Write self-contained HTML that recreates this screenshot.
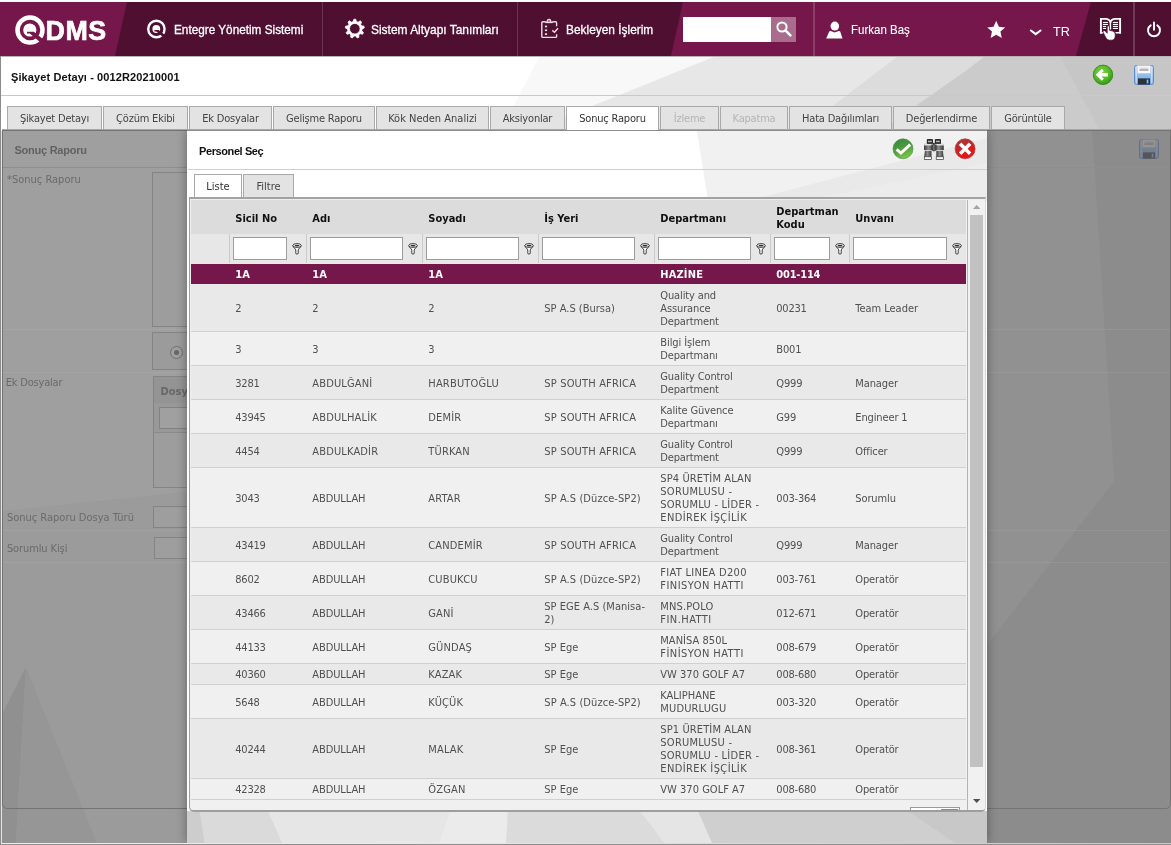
<!DOCTYPE html>
<html lang="tr"><head><meta charset="utf-8"><title>QDMS - Şikayet Detayı</title>
<style>
*{box-sizing:border-box;margin:0;padding:0}
html,body{width:1171px;height:845px;overflow:hidden;background:#fff}
#root{position:absolute;left:0;top:0;width:1171px;height:845px;overflow:hidden;will-change:transform}
body{position:relative;font-family:"DejaVu Sans Condensed","DejaVu Sans","Liberation Sans",sans-serif;font-stretch:condensed;font-size:11px;color:#505050;line-height:13px}
.abs{position:absolute}
#hdr{position:absolute;left:0;top:2px;width:1171px;height:54px;background:#75174a;overflow:hidden}
#hdr .nav{position:absolute;top:1px;height:54px;line-height:54px;color:#fff;font-family:"Liberation Sans",sans-serif;font-stretch:normal;font-size:13px;white-space:nowrap;transform-origin:0 50%;-webkit-text-stroke:0.3px #fff}
#hdr .sep{position:absolute;top:0;height:54px}
#titlebar{position:absolute;left:0;top:56px;width:1171px;height:40px}
#titlebar .t{position:absolute;left:11px;top:13px;letter-spacing:0.1px;font-family:"Liberation Sans",sans-serif;font-stretch:normal;font-weight:bold;font-size:11px;color:#111;line-height:16px;white-space:nowrap}
.tab{position:absolute;top:106px;height:23px;border:1px solid #a9a9a9;border-bottom:none;background:#e3e3e3;color:#444;text-align:center;line-height:23px;font-size:11px;white-space:nowrap;letter-spacing:-0.2px}
.tab.on{background:#fff;color:#333;height:24px;z-index:2}
.tab.dis{color:#b4b4b4}
#tabline{position:absolute;left:2px;top:129px;width:1169px;height:1px;background:#a6a6a6}


.lb{color:#aaaaaa;white-space:nowrap;letter-spacing:0}
.hd{font-weight:bold;color:#111;font-size:11px;line-height:13px;white-space:nowrap}
.row{position:absolute;left:0;border-bottom:1px solid #d0d0d0}
.row.a{background:#e9e9e9}
.row.b{background:#f0f0f0}
.row.sel{background:#75174a;color:#fff;font-weight:bold;border-bottom-color:#75174a}
.row .c{position:absolute;white-space:nowrap;line-height:13px}
</style></head><body><div id="root">
<svg class="abs" style="left:0;top:56px" width="1171" height="789" viewBox="0 0 1171 789">
<rect width="1171" height="789" fill="#ffffff"/>
<polygon points="540,0 716,0 530,75 500,75" fill="#f8f8f8"/>
<polygon points="716,0 1171,0 1171,75 530,75" fill="#e7e7e7"/>
<polygon points="898,0 1171,0 1171,75 800,75" fill="#dcdcdc"/>
<polygon points="985,0 1171,0 1171,75 880,75 967,14" fill="#cbcbcb"/>
<polygon points="1060,0 1171,0 1171,75 1100,75" fill="#c6c6c6"/>
<rect x="0" y="75" width="1171" height="714" fill="#e4e4e4"/>
<rect x="0" y="787" width="400" height="1" fill="#f4f4f4"/>
</svg>
<div id="hdr">
<svg class="abs" style="left:0;top:0" width="1171" height="54" viewBox="0 0 1171 54"><polygon points="127,0 683,0 671,54 115,54" fill="#4f0f31"/><polygon points="1091,0 1171,0 1171,54 1076,54" fill="#4f0f31"/></svg>
<svg class="abs" style="left:13px;top:11px" width="34" height="34" viewBox="0 0 34 34"><circle cx="17" cy="17" r="12.500" fill="none" stroke="#fff" stroke-width="4.500"/><circle cx="16.800" cy="17" r="6.600" fill="#fff"/><path d="M14 18.800H20.800L29.800 26L26.600 28.800L16.800 20.600H14z" fill="#75174a"/></svg>
<div class="abs" style="left:45.5px;top:9.4px;font-family:'Liberation Sans',sans-serif;font-stretch:normal;font-weight:bold;font-size:26.8px;line-height:40px;color:#fff;-webkit-text-stroke:0.7px #fff;letter-spacing:0.6px">DMS</div>
<svg class="abs" style="left:146px;top:17px" width="21" height="21" viewBox="0 0 21 21"><circle cx="10.400" cy="10" r="8.200" fill="none" stroke="#fff" stroke-width="2.400"/><circle cx="10.300" cy="10" r="3.900" fill="#fff"/><path d="M8.400 11.100H12.600L19 15.900L17 17.900L10.400 12.400H8.400z" fill="#4f0f31"/></svg>
<div class="nav" style="left:174px;transform:scaleX(0.905)">Entegre Yönetim Sistemi</div>
<div class="sep" style="left:322px;width:1px;background:#6a3450"></div>
<svg class="abs" style="left:344px;top:16px" width="22" height="22" viewBox="0 0 22 22"><path d="M9.89 1.24L11.71 1.24L12.44 3.59L14.11 4.20L16.18 2.87L17.58 4.04L16.63 6.31L17.52 7.85L19.95 8.16L20.27 9.95L18.09 11.08L17.78 12.83L19.44 14.64L18.53 16.22L16.14 15.68L14.78 16.82L14.89 19.27L13.18 19.90L11.69 17.95L9.91 17.95L8.42 19.90L6.71 19.27L6.82 16.82L5.46 15.68L3.07 16.22L2.16 14.64L3.82 12.83L3.51 11.08L1.33 9.95L1.65 8.16L4.08 7.85L4.97 6.31L4.02 4.04L5.42 2.87L7.49 4.20L9.16 3.59zM10.8 5.400A5.3 5.3 0 1 0 10.8 16.000A5.3 5.3 0 1 0 10.8 5.400z" fill="#fff" fill-rule="evenodd" stroke="#fff" stroke-width="0.800" stroke-linejoin="round"/></svg>
<div class="nav" style="left:370.800px;transform:scaleX(0.918)">Sistem Altyapı Tanımları</div>
<div class="sep" style="left:517px;width:1px;background:#6a3450"></div>
<svg class="abs" style="left:540px;top:15px" width="19" height="23" viewBox="0 0 19 23"><g fill="none" stroke="#eadde4"><path d="M5.600 4.800H2.800a1 1 0 0 0-1 1V19.400a1 1 0 0 0 1 1H15.600a1 1 0 0 0 1-1V17.300M12.400 4.800H15.600a1 1 0 0 1 1 1V9.200" stroke-width="1.400"/><path d="M5.200 5.300H12.800" stroke-width="1.700"/><path d="M7.300 4.800Q7.300 2.500 9 2.500Q10.700 2.500 10.700 4.800" stroke-width="1.400"/><path d="M12.300 13.400L14.500 15.300L18 11.200" stroke-width="1.400"/></g><g fill="#eadde4"><rect x="4.900" y="8.600" width="2.200" height="1.700"/><rect x="4.900" y="12.400" width="2.200" height="1.700"/><rect x="4.900" y="16.300" width="2.200" height="1.700"/></g></svg>
<div class="nav" style="left:565.800px;transform:scaleX(0.915)">Bekleyen İşlerim</div>
<div class="abs" style="left:683px;top:15px;width:88px;height:25px;background:#fff"></div>
<div class="abs" style="left:771px;top:15px;width:25px;height:25px;background:#a96c8d"></div>
<svg class="abs" style="left:775px;top:18px" width="18" height="18" viewBox="0 0 18 18"><circle cx="7" cy="7" r="4.6" fill="none" stroke="#fff" stroke-width="2"/><path d="M10.4 10.4L15.4 15.4" stroke="#fff" stroke-width="2.6" stroke-linecap="round"/></svg>
<div class="sep" style="left:813px;width:2px;background:#8b3e66"></div>
<svg class="abs" style="left:824.800px;top:17.500px" width="19" height="19.800" viewBox="0 0 18 19" preserveAspectRatio="none"><ellipse cx="9.300" cy="5.800" rx="4.100" ry="4.300" fill="#fff"/><path d="M1.100 17.700L3.900 11.300Q4.300 10.300 5.400 10.600L9.200 12.100L13 10.600Q14.100 10.300 14.500 11.300L16.600 17.700z" fill="#fff"/></svg>
<div class="nav" style="left:851px;transform:scaleX(0.885);-webkit-text-stroke:0.1px #fff">Furkan Baş</div>
<svg class="abs" style="left:986.300px;top:18px" width="20.400" height="19" viewBox="0 0 19 18"><polygon points="9.5,0.8 12,6.4 18,7 13.500,11 14.800,17 9.500,13.900 4.200,17 5.500,11 1,7 7,6.400" fill="#fff"/></svg>
<svg class="abs" style="left:1029px;top:27px" width="14" height="8" viewBox="0 0 14 8"><path d="M1.900 1.500L6.700 5.200L11.500 1.500" fill="none" stroke="#fff" stroke-width="2.100" stroke-linecap="round"/></svg>
<div class="nav" style="left:1053px;top:3px;transform:scaleX(0.97);-webkit-text-stroke:0">TR</div>
<svg class="abs" style="left:1099px;top:14px" width="23" height="26" viewBox="0 0 23 26"><g fill="none" stroke="#fff" stroke-width="1.900"><path d="M1.900 17.500V2.900H6.500Q10.400 2.900 11.400 6.400"/><path d="M21.100 17.500V2.900H16.300Q12.400 2.900 11.400 6.400"/></g><path d="M11.400 6V13.500" stroke="#fff" stroke-width="1.500"/><path d="M0.900 16.700H4.200M16.500 16.700H22" stroke="#fff" stroke-width="1.600"/><g fill="#fff"><rect x="3.900" y="5.900" width="5" height="1.100"/><rect x="3.900" y="7.900" width="5" height="1.100"/><rect x="3.900" y="9.900" width="3.200" height="1.100"/><rect x="3.900" y="11.900" width="3.200" height="1.100"/><rect x="13.900" y="5.900" width="5.100" height="1.100"/><rect x="13.900" y="7.900" width="5.100" height="1.100"/><rect x="13.900" y="9.900" width="5.100" height="1.100"/><rect x="13.900" y="11.900" width="5.100" height="1.100"/></g><path d="M8.200 11Q8.200 9.700 9.300 9.700Q10.400 9.700 10.400 11V14.300L13.500 15Q16.200 15.700 16.200 18V20Q16.200 24.200 12 24.200H10.600Q8 24.200 6.800 21.600L4.100 16.300Q3.600 15.100 4.700 14.700Q5.700 14.400 6.400 15.300L8.200 17.300z" fill="#fff" stroke="#4f0f31" stroke-width="0.700"/></svg>
<div class="sep" style="left:1133px;width:2px;background:#6e3a55"></div>
<svg class="abs" style="left:1144.800px;top:18.700px" width="18" height="17.500" viewBox="0 0 17 17"><path d="M5.300 4.200A5.800 5.800 0 1 0 11.700 4.200" fill="none" stroke="#fff" stroke-width="1.900" stroke-linecap="round"/><path d="M8.500 1.500V8.500" stroke="#fff" stroke-width="1.900" stroke-linecap="round"/></svg>
</div>
<div class="abs" style="left:0;top:56px;width:1171px;height:1px;background:#b5b5b5"></div>
<div class="abs" style="left:0;top:56px;width:1px;height:789px;background:#8c8c8c;z-index:9"></div>
<div id="titlebar"><div class="t">Şikayet Detayı - 0012R20210001</div></div>
<div class="abs" style="left:1px;top:95px;width:1170px;height:1px;background:#c9c9c9"></div>
<svg class="abs" style="left:1092px;top:64px" width="22" height="22" viewBox="0 0 22 22"><defs><radialGradient id="gb" cx="0.42" cy="0.35" r="0.75"><stop offset="0" stop-color="#7fd543"/><stop offset="0.55" stop-color="#55b625"/><stop offset="1" stop-color="#2f9014"/></radialGradient></defs><circle cx="11" cy="10.800" r="9.700" fill="url(#gb)" stroke="#2c8a14" stroke-width="0.900"/><path d="M10.800 5.900L5.800 10.800L10.800 15.700" fill="none" stroke="#fff" stroke-width="2.900" stroke-linejoin="miter"/><path d="M6.500 10.800H16" stroke="#fff" stroke-width="3.400"/></svg>
<svg class="abs" style="left:1134px;top:65px;opacity:1" width="20" height="20" viewBox="0 0 20 20"><defs><linearGradient id="sva" x1="0" y1="0" x2="0" y2="1"><stop offset="0" stop-color="#b9d4f6"/><stop offset="1" stop-color="#6ea4e6"/></linearGradient></defs><rect x="0.500" y="0.500" width="19" height="19" rx="2" fill="url(#sva)" stroke="#5c8cd2"/><rect x="1.600" y="1.500" width="1.300" height="17" fill="#dbe9fb" opacity="0.800"/><rect x="17.100" y="1.500" width="1.300" height="17" fill="#dbe9fb" opacity="0.800"/><rect x="3.600" y="0.600" width="12.800" height="7.600" fill="#fafafa" stroke="#c9d3e2" stroke-width="0.500"/><rect x="5.500" y="2.600" width="9" height="1" fill="#c9c9c9"/><rect x="5.500" y="4.400" width="9" height="1.200" fill="#8a8a8a"/><rect x="4" y="13.400" width="12" height="6.200" fill="#2c323b"/><rect x="12.700" y="14.600" width="1.700" height="3.800" fill="#8fbcf2"/></svg>
<div id="tabline"></div>
<div class="tab " style="left:7px;width:95px">Şikayet Detayı</div>
<div class="tab " style="left:103px;width:85px">Çözüm Ekibi</div>
<div class="tab " style="left:189px;width:83px">Ek Dosyalar</div>
<div class="tab " style="left:273px;width:102px">Gelişme Raporu</div>
<div class="tab " style="left:376px;width:113px;letter-spacing:0">Kök Neden Analizi</div>
<div class="tab " style="left:490px;width:75px">Aksiyonlar</div>
<div class="tab on" style="left:566px;width:93px">Sonuç Raporu</div>
<div class="tab dis" style="left:660px;width:59px">İzleme</div>
<div class="tab dis" style="left:720px;width:68px">Kapatma</div>
<div class="tab " style="left:789px;width:103px">Hata Dağılımları</div>
<div class="tab " style="left:893px;width:97px">Değerlendirme</div>
<div class="tab " style="left:991px;width:74px">Görüntüle</div>
<svg class="abs" style="left:2px;top:131px" width="1169" height="712" viewBox="0 0 1169 712">
<rect width="1169" height="712" fill="#fefefe"/>
<polygon points="0,380 190,360 190,712 0,712" fill="#f8f8f8"/>
<polygon points="24,536 0,583 0,712 14,712" fill="#e6e6e6"/>
<polygon points="24,536 14,712 95,712" fill="#f0f0f0"/>
<rect x="980" y="0" width="189" height="712" fill="#e0e0e0"/>
<polygon points="980,0 1090,0 1112,350 980,520" fill="#e8e8e8"/>
</svg>
<div class="abs" id="panel" style="left:2px;top:130px;width:1169px;height:679px;border:1px solid #b9b9b9;border-radius:0 0 5px 5px;font-size:11px">
<div class="abs" style="left:11.500px;top:13px;font-family:'Liberation Sans',sans-serif;font-stretch:normal;font-weight:bold;font-size:11px;color:#9c9c9c;letter-spacing:-0.25px">Sonuç Raporu</div>
<div class="abs" style="left:0;top:36px;width:1167px;height:1px;background:#e2e2e2"></div>
<div class="abs lb" style="left:4px;top:42px">*Sonuç Raporu</div>
<div class="abs" style="left:149px;top:41px;width:700px;height:155px;border:1px solid #d2d2d2;background:#fbfbfb"></div>
<div class="abs" style="left:149px;top:201px;width:700px;height:38px;border:1px solid #d2d2d2;background:#f8f8f8"></div>
<div class="abs" style="left:167px;top:215px;width:13px;height:13px;border:1px solid #b0b0b0;border-radius:50%;background:#fdfdfd"><div style="position:absolute;left:3px;top:3px;width:5px;height:5px;border-radius:50%;background:#a4a4a4"></div></div>
<div class="abs lb" style="left:2.800px;top:244.500px;letter-spacing:-0.2px">Ek Dosyalar</div>
<div class="abs" style="left:150px;top:245px;width:700px;height:112px;border:1px solid #d2d2d2;background:#fafafa">
 <div class="abs" style="left:0;top:0;width:698px;height:26px;background:#ececec"></div>
 <div class="abs" style="left:6.500px;top:8px;font-weight:bold;color:#a4a4a4">Dosya Adı</div>
 <div class="abs" style="left:0;top:26px;width:698px;height:30px;background:#f3f3f3;border-bottom:1px solid #dedede"></div>
 <div class="abs" style="left:5px;top:30px;width:200px;height:22px;border:1px solid #cfcfcf;background:#fff"></div>
</div>
<div class="abs lb" style="left:3.900px;top:379.700px">Sonuç Raporu Dosya Türü</div>
<div class="abs" style="left:150px;top:375px;width:240px;height:22px;border:1px solid #d2d2d2;background:#fcfcfc"></div>
<div class="abs lb" style="left:3.900px;top:410.500px;letter-spacing:-0.1px">Sorumlu Kişi</div>
<div class="abs" style="left:151px;top:406px;width:240px;height:22px;border:1px solid #d2d2d2;background:#fcfcfc"></div>
</div>
<svg class="abs" style="left:1139px;top:139px;opacity:0.5" width="20" height="20" viewBox="0 0 20 20"><defs><linearGradient id="svb" x1="0" y1="0" x2="0" y2="1"><stop offset="0" stop-color="#b9d4f6"/><stop offset="1" stop-color="#6ea4e6"/></linearGradient></defs><rect x="0.500" y="0.500" width="19" height="19" rx="2" fill="url(#svb)" stroke="#5c8cd2"/><rect x="1.600" y="1.500" width="1.300" height="17" fill="#dbe9fb" opacity="0.800"/><rect x="17.100" y="1.500" width="1.300" height="17" fill="#dbe9fb" opacity="0.800"/><rect x="3.600" y="0.600" width="12.800" height="7.600" fill="#fafafa" stroke="#c9d3e2" stroke-width="0.500"/><rect x="5.500" y="2.600" width="9" height="1" fill="#c9c9c9"/><rect x="5.500" y="4.400" width="9" height="1.200" fill="#8a8a8a"/><rect x="4" y="13.400" width="12" height="6.200" fill="#2c323b"/><rect x="12.700" y="14.600" width="1.700" height="3.800" fill="#8fbcf2"/></svg>
<div class="abs" id="frame" style="left:2px;top:130px;width:1169px;height:713px;overflow:hidden"><div class="abs" style="left:0;top:0;width:1169px;height:713px;background:rgba(0,0,0,0.372)"></div><div class="abs" style="left:1px;top:199px;width:1167px;border-top:1px dotted rgba(255,255,255,0.12)"></div><div class="abs" style="left:1px;top:242px;width:1167px;border-top:1px dotted rgba(255,255,255,0.12)"></div><div class="abs" style="left:1px;top:400px;width:1167px;border-top:1px dotted rgba(255,255,255,0.12)"></div><div class="abs" style="left:1px;top:432px;width:1167px;border-top:1px dotted rgba(255,255,255,0.12)"></div>
<div class="abs" style="left:0;top:844px;width:1171px;height:1px;background:#9a9a9a"></div>
<div class="abs" id="modal" style="left:185px;top:0;width:800px;height:713px;background:#fff;box-shadow:0 0 10px rgba(0,0,0,0.36);overflow:hidden"><div class="abs" style="left:1px;top:0;width:799px;height:716px"><div class="abs" style="left:0;top:1px;width:799px;height:712px">
<svg class="abs" style="left:-1px;top:0" width="800" height="714" viewBox="-1 0 800 714">
<rect x="-1" width="800" height="714" fill="#ffffff"/>
<polygon points="509,0 799,0 799,70 520,70" fill="#f1f1f1"/>
<polygon points="799,7 799,70 560,70" fill="#e9e9e9"/>
<polygon points="799,32 799,70 618,70" fill="#ececec"/>
<rect x="0" y="680" width="799" height="34" fill="#dedede"/>
<polygon points="-1,680 12,680 17,714 -1,714" fill="#cdcdcd"/>
<polygon points="12,680 80,680 95,714 17,714" fill="#dadada"/>
<polygon points="80,680 262,680 250,714 95,714" fill="#e6e6e6"/>
<polygon points="262,680 320,680 318,714 250,714" fill="#ebebeb"/>
<polygon points="320,680 452,680 478,714 318,714" fill="#dbdbdb"/>
<polygon points="452,680 510,680 525,714 478,714" fill="#e5e5e5"/>
<polygon points="510,680 799,680 799,714 525,714" fill="#cfcfcf"/>
<polygon points="720,680 799,680 799,714 770,714" fill="#c8c8c8"/>
</svg>
<div class="abs" style="left:11px;top:12px;font-family:'Liberation Sans',sans-serif;font-stretch:normal;font-weight:bold;font-size:11px;color:#111;line-height:16px;letter-spacing:-0.4px;white-space:nowrap">Personel Seç</div>
<div class="abs" style="left:0;top:38px;width:799px;height:1px;background:#cfcfcf"></div>
<svg class="abs" style="left:704px;top:7px" width="22" height="22" viewBox="0 0 22 22"><defs><linearGradient id="gc" x1="0.3" y1="0" x2="0.7" y2="1"><stop offset="0" stop-color="#3a8744"/><stop offset="0.5" stop-color="#4f9f3c"/><stop offset="1" stop-color="#86cc45"/></linearGradient></defs><circle cx="11" cy="10.800" r="10" fill="url(#gc)" stroke="#3a8a3a" stroke-width="0.600"/><path d="M4.600 11.300L8.900 15.100L18.200 6.600" fill="none" stroke="#fff" stroke-width="3"/><path d="M4.600 12.600L8.900 16.400" fill="none" stroke="#cfd8cf" stroke-width="0.800" opacity="0.700"/></svg>
<svg class="abs" style="left:736px;top:7.800px" width="20" height="21.200" viewBox="0 0 20 21.200"><defs><linearGradient id="bg1" x1="0" y1="0" x2="1" y2="0"><stop offset="0" stop-color="#3a3a3a"/><stop offset="0.450" stop-color="#8e8e8e"/><stop offset="1" stop-color="#3a3a3a"/></linearGradient></defs><rect x="2.800" y="0" width="6.200" height="5.200" rx="0.900" fill="#2c2c2c"/><rect x="10.800" y="0" width="6.200" height="5.200" rx="0.900" fill="#2c2c2c"/><rect x="4" y="1.700" width="3.800" height="1.500" fill="#b4b4b4"/><rect x="12" y="1.700" width="3.800" height="1.500" fill="#b4b4b4"/><rect x="0.400" y="5" width="19.200" height="1.600" fill="#f2f2f2" stroke="#8a8a8a" stroke-width="0.300"/><rect x="0" y="6.500" width="9.600" height="4.600" fill="url(#bg1)"/><rect x="10.200" y="6.500" width="9.600" height="4.600" fill="url(#bg1)"/><path d="M7.300 5.400h5.200v5.900l-2.600 1.300l-2.600-1.300z" fill="#454545"/><rect x="9.400" y="6" width="1" height="5.400" fill="#8c8c8c"/><circle cx="9.900" cy="4.800" r="1.100" fill="#3a3a3a"/><rect x="0.600" y="11.100" width="6.800" height="0.700" fill="#eee"/><rect x="12.600" y="11.100" width="6.800" height="0.700" fill="#eee"/><path d="M0.900 11.800H7.500V17.700H0.200z" fill="url(#bg1)"/><path d="M12.300 11.800H18.900L19.600 17.700H12.300z" fill="url(#bg1)"/><rect x="0.300" y="17.800" width="7.300" height="2.700" fill="#fafafa" stroke="#333" stroke-width="0.700"/><rect x="12.200" y="17.800" width="7.300" height="2.700" fill="#fafafa" stroke="#333" stroke-width="0.700"/></svg>
<svg class="abs" style="left:766px;top:7px" width="22" height="22" viewBox="0 0 22 22"><defs><linearGradient id="gr" x1="0.3" y1="0" x2="0.7" y2="1"><stop offset="0" stop-color="#a63a3c"/><stop offset="0.5" stop-color="#d21f1f"/><stop offset="1" stop-color="#f40f0f"/></linearGradient></defs><circle cx="11.100" cy="10.800" r="10" fill="url(#gr)" stroke="#a33" stroke-width="0.600"/><path d="M6.100 5.800L16.100 15.800M16.100 5.800L6.100 15.800" stroke="#fff" stroke-width="3.600"/></svg>
<div class="abs" style="left:6px;top:43px;width:48px;height:23px;border:1px solid #a9a9a9;border-bottom:none;background:#fff;text-align:center;line-height:23px;color:#333">Liste</div>
<div class="abs" style="left:55px;top:43px;width:51px;height:23px;border:1px solid #a9a9a9;border-bottom:none;background:#e3e3e3;text-align:center;line-height:23px;color:#444">Filtre</div>
<div class="abs" id="grid" style="left:1px;top:66px;width:797px;height:615px;border:1px solid #9e9e9e;border-width:2px 1px 2px 1px;border-top-color:#a2a2a2;border-right-color:#d9d9d9;padding:1px;border-radius:0 0 5px 5px;background:#efefef;overflow:hidden"><div class="abs" style="left:1px;top:1px;width:793px;height:610px;background:#f0f0f0">
<div class="abs" style="left:0;top:0;width:775px;height:34px;background:#dcdcdc"></div>
<div class="abs hd" style="left:44.3px;top:11.7px">Sicil No</div>
<div class="abs hd" style="left:121.3px;top:11.7px">Adı</div>
<div class="abs hd" style="left:237.3px;top:11.7px">Soyadı</div>
<div class="abs hd" style="left:353.3px;top:11.7px">İş Yeri</div>
<div class="abs hd" style="left:469.3px;top:11.7px">Departmanı</div>
<div class="abs hd" style="left:585.3px;top:5.2px">Departman<br>Kodu</div>
<div class="abs hd" style="left:664.3px;top:11.7px">Unvanı</div>
<div class="abs" style="left:0;top:34px;width:775px;height:30px;background:#e7e7e7"></div>
<div class="abs" style="left:38px;top:34px;width:1px;height:29px;background:#cbcbcb"></div>
<div class="abs" style="left:42px;top:37px;width:54px;height:23px;border:1px solid #9c9c9c;background:#fff"></div>
<svg class="abs" style="left:100.5px;top:42.5px" width="10" height="12" viewBox="0 0 10 12"><path d="M0.800 2.600C0.800 4.400 3.700 5.600 3.800 7V10.600Q5 11.600 6.200 10.600V7C6.300 5.600 9.200 4.400 9.200 2.600" fill="#fff" stroke="#2e2e2e" stroke-width="0.900"/><ellipse cx="5" cy="2.500" rx="4.200" ry="1.900" fill="#fff" stroke="#2e2e2e" stroke-width="0.900"/><ellipse cx="5" cy="2.600" rx="2.500" ry="0.900" fill="#333"/></svg>
<div class="abs" style="left:115px;top:34px;width:1px;height:29px;background:#cbcbcb"></div>
<div class="abs" style="left:119px;top:37px;width:93px;height:23px;border:1px solid #9c9c9c;background:#fff"></div>
<svg class="abs" style="left:216.5px;top:42.5px" width="10" height="12" viewBox="0 0 10 12"><path d="M0.800 2.600C0.800 4.400 3.700 5.600 3.800 7V10.600Q5 11.600 6.200 10.600V7C6.300 5.600 9.200 4.400 9.200 2.600" fill="#fff" stroke="#2e2e2e" stroke-width="0.900"/><ellipse cx="5" cy="2.500" rx="4.200" ry="1.900" fill="#fff" stroke="#2e2e2e" stroke-width="0.900"/><ellipse cx="5" cy="2.600" rx="2.500" ry="0.900" fill="#333"/></svg>
<div class="abs" style="left:231px;top:34px;width:1px;height:29px;background:#cbcbcb"></div>
<div class="abs" style="left:235px;top:37px;width:93px;height:23px;border:1px solid #9c9c9c;background:#fff"></div>
<svg class="abs" style="left:332.5px;top:42.5px" width="10" height="12" viewBox="0 0 10 12"><path d="M0.800 2.600C0.800 4.400 3.700 5.600 3.800 7V10.600Q5 11.600 6.200 10.600V7C6.300 5.600 9.200 4.400 9.200 2.600" fill="#fff" stroke="#2e2e2e" stroke-width="0.900"/><ellipse cx="5" cy="2.500" rx="4.200" ry="1.900" fill="#fff" stroke="#2e2e2e" stroke-width="0.900"/><ellipse cx="5" cy="2.600" rx="2.500" ry="0.900" fill="#333"/></svg>
<div class="abs" style="left:347px;top:34px;width:1px;height:29px;background:#cbcbcb"></div>
<div class="abs" style="left:351px;top:37px;width:93px;height:23px;border:1px solid #9c9c9c;background:#fff"></div>
<svg class="abs" style="left:448.5px;top:42.5px" width="10" height="12" viewBox="0 0 10 12"><path d="M0.800 2.600C0.800 4.400 3.700 5.600 3.800 7V10.600Q5 11.600 6.200 10.600V7C6.300 5.600 9.200 4.400 9.200 2.600" fill="#fff" stroke="#2e2e2e" stroke-width="0.900"/><ellipse cx="5" cy="2.500" rx="4.200" ry="1.900" fill="#fff" stroke="#2e2e2e" stroke-width="0.900"/><ellipse cx="5" cy="2.600" rx="2.500" ry="0.900" fill="#333"/></svg>
<div class="abs" style="left:463px;top:34px;width:1px;height:29px;background:#cbcbcb"></div>
<div class="abs" style="left:467px;top:37px;width:93px;height:23px;border:1px solid #9c9c9c;background:#fff"></div>
<svg class="abs" style="left:564.5px;top:42.5px" width="10" height="12" viewBox="0 0 10 12"><path d="M0.800 2.600C0.800 4.400 3.700 5.600 3.800 7V10.600Q5 11.600 6.200 10.600V7C6.300 5.600 9.200 4.400 9.200 2.600" fill="#fff" stroke="#2e2e2e" stroke-width="0.900"/><ellipse cx="5" cy="2.500" rx="4.200" ry="1.900" fill="#fff" stroke="#2e2e2e" stroke-width="0.900"/><ellipse cx="5" cy="2.600" rx="2.500" ry="0.900" fill="#333"/></svg>
<div class="abs" style="left:579px;top:34px;width:1px;height:29px;background:#cbcbcb"></div>
<div class="abs" style="left:583px;top:37px;width:56px;height:23px;border:1px solid #9c9c9c;background:#fff"></div>
<svg class="abs" style="left:643.5px;top:42.5px" width="10" height="12" viewBox="0 0 10 12"><path d="M0.800 2.600C0.800 4.400 3.700 5.600 3.800 7V10.600Q5 11.600 6.200 10.600V7C6.300 5.600 9.200 4.400 9.200 2.600" fill="#fff" stroke="#2e2e2e" stroke-width="0.900"/><ellipse cx="5" cy="2.500" rx="4.200" ry="1.900" fill="#fff" stroke="#2e2e2e" stroke-width="0.900"/><ellipse cx="5" cy="2.600" rx="2.500" ry="0.900" fill="#333"/></svg>
<div class="abs" style="left:658px;top:34px;width:1px;height:29px;background:#cbcbcb"></div>
<div class="abs" style="left:662px;top:37px;width:94px;height:23px;border:1px solid #9c9c9c;background:#fff"></div>
<svg class="abs" style="left:760.5px;top:42.5px" width="10" height="12" viewBox="0 0 10 12"><path d="M0.800 2.600C0.800 4.400 3.700 5.600 3.800 7V10.600Q5 11.600 6.200 10.600V7C6.300 5.600 9.200 4.400 9.200 2.600" fill="#fff" stroke="#2e2e2e" stroke-width="0.900"/><ellipse cx="5" cy="2.500" rx="4.200" ry="1.900" fill="#fff" stroke="#2e2e2e" stroke-width="0.900"/><ellipse cx="5" cy="2.600" rx="2.500" ry="0.900" fill="#333"/></svg>
<div class="row sel" style="top:64px;height:20px;width:775px">
<div class="c" style="left:44.3px;top:4.19px"><div style="letter-spacing:-0.05px">1A</div></div>
<div class="c" style="left:121.3px;top:4.19px"><div style="letter-spacing:-0.05px">1A</div></div>
<div class="c" style="left:237.3px;top:4.19px"><div style="letter-spacing:-0.05px">1A</div></div>
<div class="c" style="left:469.3px;top:4.19px"><div style="letter-spacing:0.15px">HAZİNE</div></div>
<div class="c" style="left:585.3px;top:4.19px"><div style="letter-spacing:-0.21px">001-114</div></div>
</div>
<div class="row a" style="top:84px;height:48px;width:775px">
<div class="c" style="left:44.3px;top:18.19px"><div style="letter-spacing:-0.25px">2</div></div>
<div class="c" style="left:121.3px;top:18.19px"><div style="letter-spacing:-0.25px">2</div></div>
<div class="c" style="left:237.3px;top:18.19px"><div style="letter-spacing:-0.25px">2</div></div>
<div class="c" style="left:353.3px;top:18.19px"><div style="letter-spacing:0.00px">SP A.S (Bursa)</div></div>
<div class="c" style="left:469.3px;top:5.19px"><div style="letter-spacing:-0.13px">Quality and</div><div style="letter-spacing:-0.13px">Assurance</div><div style="letter-spacing:-0.14px">Department</div></div>
<div class="c" style="left:585.3px;top:18.19px"><div style="letter-spacing:-0.25px">00231</div></div>
<div class="c" style="left:664.3px;top:18.19px"><div style="letter-spacing:-0.03px">Team Leader</div></div>
</div>
<div class="row b" style="top:132px;height:34px;width:775px">
<div class="c" style="left:44.3px;top:11.19px"><div style="letter-spacing:-0.25px">3</div></div>
<div class="c" style="left:121.3px;top:11.19px"><div style="letter-spacing:-0.25px">3</div></div>
<div class="c" style="left:237.3px;top:11.19px"><div style="letter-spacing:-0.25px">3</div></div>
<div class="c" style="left:469.3px;top:4.19px"><div style="letter-spacing:-0.10px">Bilgi İşlem</div><div style="letter-spacing:-0.14px">Departmanı</div></div>
<div class="c" style="left:585.3px;top:11.19px"><div style="letter-spacing:-0.15px">B001</div></div>
</div>
<div class="row a" style="top:166px;height:34px;width:775px">
<div class="c" style="left:44.3px;top:11.19px"><div style="letter-spacing:-0.25px">3281</div></div>
<div class="c" style="left:121.3px;top:11.19px"><div style="letter-spacing:0.15px">ABDULĞANİ</div></div>
<div class="c" style="left:237.3px;top:11.19px"><div style="letter-spacing:0.18px">HARBUTOĞLU</div></div>
<div class="c" style="left:353.3px;top:11.19px"><div style="letter-spacing:0.17px">SP SOUTH AFRICA</div></div>
<div class="c" style="left:469.3px;top:4.19px"><div style="letter-spacing:-0.12px">Guality Control</div><div style="letter-spacing:-0.14px">Department</div></div>
<div class="c" style="left:585.3px;top:11.19px"><div style="letter-spacing:-0.15px">Q999</div></div>
<div class="c" style="left:664.3px;top:11.19px"><div style="letter-spacing:-0.12px">Manager</div></div>
</div>
<div class="row b" style="top:200px;height:34px;width:775px">
<div class="c" style="left:44.3px;top:11.19px"><div style="letter-spacing:-0.25px">43945</div></div>
<div class="c" style="left:121.3px;top:11.19px"><div style="letter-spacing:0.15px">ABDULHALİK</div></div>
<div class="c" style="left:237.3px;top:11.19px"><div style="letter-spacing:0.15px">DEMİR</div></div>
<div class="c" style="left:353.3px;top:11.19px"><div style="letter-spacing:0.17px">SP SOUTH AFRICA</div></div>
<div class="c" style="left:469.3px;top:4.19px"><div style="letter-spacing:-0.11px">Kalite Güvence</div><div style="letter-spacing:-0.14px">Departmanı</div></div>
<div class="c" style="left:585.3px;top:11.19px"><div style="letter-spacing:-0.12px">G99</div></div>
<div class="c" style="left:664.3px;top:11.19px"><div style="letter-spacing:-0.13px">Engineer 1</div></div>
</div>
<div class="row a" style="top:234px;height:34px;width:775px">
<div class="c" style="left:44.3px;top:11.19px"><div style="letter-spacing:-0.25px">4454</div></div>
<div class="c" style="left:121.3px;top:11.19px"><div style="letter-spacing:0.15px">ABDULKADİR</div></div>
<div class="c" style="left:237.3px;top:11.19px"><div style="letter-spacing:0.15px">TÜRKAN</div></div>
<div class="c" style="left:353.3px;top:11.19px"><div style="letter-spacing:0.17px">SP SOUTH AFRICA</div></div>
<div class="c" style="left:469.3px;top:4.19px"><div style="letter-spacing:-0.12px">Guality Control</div><div style="letter-spacing:-0.14px">Department</div></div>
<div class="c" style="left:585.3px;top:11.19px"><div style="letter-spacing:-0.15px">Q999</div></div>
<div class="c" style="left:664.3px;top:11.19px"><div style="letter-spacing:-0.12px">Officer</div></div>
</div>
<div class="row b" style="top:268px;height:60px;width:775px">
<div class="c" style="left:44.3px;top:24.19px"><div style="letter-spacing:-0.25px">3043</div></div>
<div class="c" style="left:121.3px;top:24.19px"><div style="letter-spacing:-0.10px">ABDULLAH</div></div>
<div class="c" style="left:237.3px;top:24.19px"><div style="letter-spacing:0.15px">ARTAR</div></div>
<div class="c" style="left:353.3px;top:24.19px"><div style="letter-spacing:0.08px">SP A.S (Düzce-SP2)</div></div>
<div class="c" style="left:469.3px;top:4.19px"><div style="letter-spacing:0.12px">SP4 ÜRETİM ALAN</div><div style="letter-spacing:0.26px">SORUMLUSU -</div><div style="letter-spacing:0.25px">SORUMLU - LİDER -</div><div style="letter-spacing:0.39px">ENDİREK İŞÇİLİK</div></div>
<div class="c" style="left:585.3px;top:24.19px"><div style="letter-spacing:-0.21px">003-364</div></div>
<div class="c" style="left:664.3px;top:24.19px"><div style="letter-spacing:-0.12px">Sorumlu</div></div>
</div>
<div class="row a" style="top:328px;height:34px;width:775px">
<div class="c" style="left:44.3px;top:11.19px"><div style="letter-spacing:-0.25px">43419</div></div>
<div class="c" style="left:121.3px;top:11.19px"><div style="letter-spacing:-0.10px">ABDULLAH</div></div>
<div class="c" style="left:237.3px;top:11.19px"><div style="letter-spacing:0.15px">CANDEMİR</div></div>
<div class="c" style="left:353.3px;top:11.19px"><div style="letter-spacing:0.17px">SP SOUTH AFRICA</div></div>
<div class="c" style="left:469.3px;top:4.19px"><div style="letter-spacing:-0.12px">Guality Control</div><div style="letter-spacing:-0.14px">Department</div></div>
<div class="c" style="left:585.3px;top:11.19px"><div style="letter-spacing:-0.15px">Q999</div></div>
<div class="c" style="left:664.3px;top:11.19px"><div style="letter-spacing:-0.12px">Manager</div></div>
</div>
<div class="row b" style="top:362px;height:34px;width:775px">
<div class="c" style="left:44.3px;top:11.19px"><div style="letter-spacing:-0.25px">8602</div></div>
<div class="c" style="left:121.3px;top:11.19px"><div style="letter-spacing:-0.10px">ABDULLAH</div></div>
<div class="c" style="left:237.3px;top:11.19px"><div style="letter-spacing:0.15px">CUBUKCU</div></div>
<div class="c" style="left:353.3px;top:11.19px"><div style="letter-spacing:0.08px">SP A.S (Düzce-SP2)</div></div>
<div class="c" style="left:469.3px;top:4.19px"><div style="letter-spacing:0.28px">FIAT LINEA D200</div><div style="letter-spacing:0.45px">FINISYON HATTI</div></div>
<div class="c" style="left:585.3px;top:11.19px"><div style="letter-spacing:-0.21px">003-761</div></div>
<div class="c" style="left:664.3px;top:11.19px"><div style="letter-spacing:-0.13px">Operatör</div></div>
</div>
<div class="row a" style="top:396px;height:34px;width:775px">
<div class="c" style="left:44.3px;top:11.19px"><div style="letter-spacing:-0.25px">43466</div></div>
<div class="c" style="left:121.3px;top:11.19px"><div style="letter-spacing:-0.10px">ABDULLAH</div></div>
<div class="c" style="left:237.3px;top:11.19px"><div style="letter-spacing:0.15px">GANİ</div></div>
<div class="c" style="left:353.3px;top:4.19px"><div style="letter-spacing:0.03px">SP EGE A.S (Manisa-</div><div style="letter-spacing:-0.12px">2)</div></div>
<div class="c" style="left:469.3px;top:4.19px"><div style="letter-spacing:0.13px">MNS.POLO</div><div style="letter-spacing:0.45px">FIN.HATTI</div></div>
<div class="c" style="left:585.3px;top:11.19px"><div style="letter-spacing:-0.21px">012-671</div></div>
<div class="c" style="left:664.3px;top:11.19px"><div style="letter-spacing:-0.13px">Operatör</div></div>
</div>
<div class="row b" style="top:430px;height:34px;width:775px">
<div class="c" style="left:44.3px;top:11.19px"><div style="letter-spacing:-0.25px">44133</div></div>
<div class="c" style="left:121.3px;top:11.19px"><div style="letter-spacing:-0.10px">ABDULLAH</div></div>
<div class="c" style="left:237.3px;top:11.19px"><div style="letter-spacing:0.15px">GÜNDAŞ</div></div>
<div class="c" style="left:353.3px;top:11.19px"><div style="letter-spacing:0.02px">SP Ege</div></div>
<div class="c" style="left:469.3px;top:4.19px"><div style="letter-spacing:0.03px">MANİSA 850L</div><div style="letter-spacing:0.45px">FİNİSYON HATTI</div></div>
<div class="c" style="left:585.3px;top:11.19px"><div style="letter-spacing:-0.21px">008-679</div></div>
<div class="c" style="left:664.3px;top:11.19px"><div style="letter-spacing:-0.13px">Operatör</div></div>
</div>
<div class="row a" style="top:464px;height:21px;width:775px">
<div class="c" style="left:44.3px;top:4.19px"><div style="letter-spacing:-0.25px">40360</div></div>
<div class="c" style="left:121.3px;top:4.19px"><div style="letter-spacing:-0.10px">ABDULLAH</div></div>
<div class="c" style="left:237.3px;top:4.19px"><div style="letter-spacing:0.15px">KAZAK</div></div>
<div class="c" style="left:353.3px;top:4.19px"><div style="letter-spacing:0.02px">SP Ege</div></div>
<div class="c" style="left:469.3px;top:4.19px"><div style="letter-spacing:0.02px">VW 370 GOLF A7</div></div>
<div class="c" style="left:585.3px;top:4.19px"><div style="letter-spacing:-0.21px">008-680</div></div>
<div class="c" style="left:664.3px;top:4.19px"><div style="letter-spacing:-0.13px">Operatör</div></div>
</div>
<div class="row b" style="top:485px;height:34px;width:775px">
<div class="c" style="left:44.3px;top:11.19px"><div style="letter-spacing:-0.25px">5648</div></div>
<div class="c" style="left:121.3px;top:11.19px"><div style="letter-spacing:-0.10px">ABDULLAH</div></div>
<div class="c" style="left:237.3px;top:11.19px"><div style="letter-spacing:0.15px">KÜÇÜK</div></div>
<div class="c" style="left:353.3px;top:11.19px"><div style="letter-spacing:0.08px">SP A.S (Düzce-SP2)</div></div>
<div class="c" style="left:469.3px;top:4.19px"><div style="letter-spacing:0.00px">KALIPHANE</div><div style="letter-spacing:0.15px">MUDURLUGU</div></div>
<div class="c" style="left:585.3px;top:11.19px"><div style="letter-spacing:-0.21px">003-320</div></div>
<div class="c" style="left:664.3px;top:11.19px"><div style="letter-spacing:-0.13px">Operatör</div></div>
</div>
<div class="row a" style="top:519px;height:60px;width:775px">
<div class="c" style="left:44.3px;top:24.19px"><div style="letter-spacing:-0.25px">40244</div></div>
<div class="c" style="left:121.3px;top:24.19px"><div style="letter-spacing:-0.10px">ABDULLAH</div></div>
<div class="c" style="left:237.3px;top:24.19px"><div style="letter-spacing:0.15px">MALAK</div></div>
<div class="c" style="left:353.3px;top:24.19px"><div style="letter-spacing:0.02px">SP Ege</div></div>
<div class="c" style="left:469.3px;top:4.19px"><div style="letter-spacing:0.12px">SP1 ÜRETİM ALAN</div><div style="letter-spacing:0.26px">SORUMLUSU -</div><div style="letter-spacing:0.25px">SORUMLU - LİDER -</div><div style="letter-spacing:0.39px">ENDİREK İŞÇİLİK</div></div>
<div class="c" style="left:585.3px;top:24.19px"><div style="letter-spacing:-0.21px">008-361</div></div>
<div class="c" style="left:664.3px;top:24.19px"><div style="letter-spacing:-0.13px">Operatör</div></div>
</div>
<div class="row b" style="top:579px;height:21px;width:775px">
<div class="c" style="left:44.3px;top:4.19px"><div style="letter-spacing:-0.25px">42328</div></div>
<div class="c" style="left:121.3px;top:4.19px"><div style="letter-spacing:-0.10px">ABDULLAH</div></div>
<div class="c" style="left:237.3px;top:4.19px"><div style="letter-spacing:0.15px">ÖZGAN</div></div>
<div class="c" style="left:353.3px;top:4.19px"><div style="letter-spacing:0.02px">SP Ege</div></div>
<div class="c" style="left:469.3px;top:4.19px"><div style="letter-spacing:0.02px">VW 370 GOLF A7</div></div>
<div class="c" style="left:585.3px;top:4.19px"><div style="letter-spacing:-0.21px">008-680</div></div>
<div class="c" style="left:664.3px;top:4.19px"><div style="letter-spacing:-0.13px">Operatör</div></div>
</div>
<div class="abs" style="left:719px;top:607px;width:50px;height:10px;border:1px solid #9a9a9a;background:#fff"><div style="position:absolute;left:30px;top:1px;width:17px;height:2px;background:#8a8a8a"></div></div>
<div class="abs" style="left:776px;top:0;width:1px;height:612px;background:#b4b4b4"></div>
<div class="abs" style="left:777px;top:0;width:17px;height:612px;background:#f1f1f1"></div>
<div class="abs" style="left:779px;top:15px;width:13px;height:552px;background:#c1c1c1"></div>
<svg class="abs" style="left:782px;top:5px" width="8" height="4" viewBox="0 0 8 4"><path d="M0 4L3.700 0L7.400 4z" fill="#a3a3a3"/></svg>
<svg class="abs" style="left:782px;top:599px" width="8" height="4" viewBox="0 0 8 4"><path d="M0 0L3.700 4L7.400 0z" fill="#505050"/></svg>
</div></div>
</div><div class="abs" style="left:-1px;top:0;width:800px;height:1px;background:#8c8c8c"></div></div></div></div>
<div class="abs" style="left:1px;top:843px;width:1170px;height:1px;background:linear-gradient(90deg,#ededed 0,#e6e6e6 40%,#cfcfcf 80%,#c8c8c8 100%)"></div><div class="abs" style="left:0;top:844px;width:1171px;height:1px;background:#8e8e8e"></div>
</div></body></html>
